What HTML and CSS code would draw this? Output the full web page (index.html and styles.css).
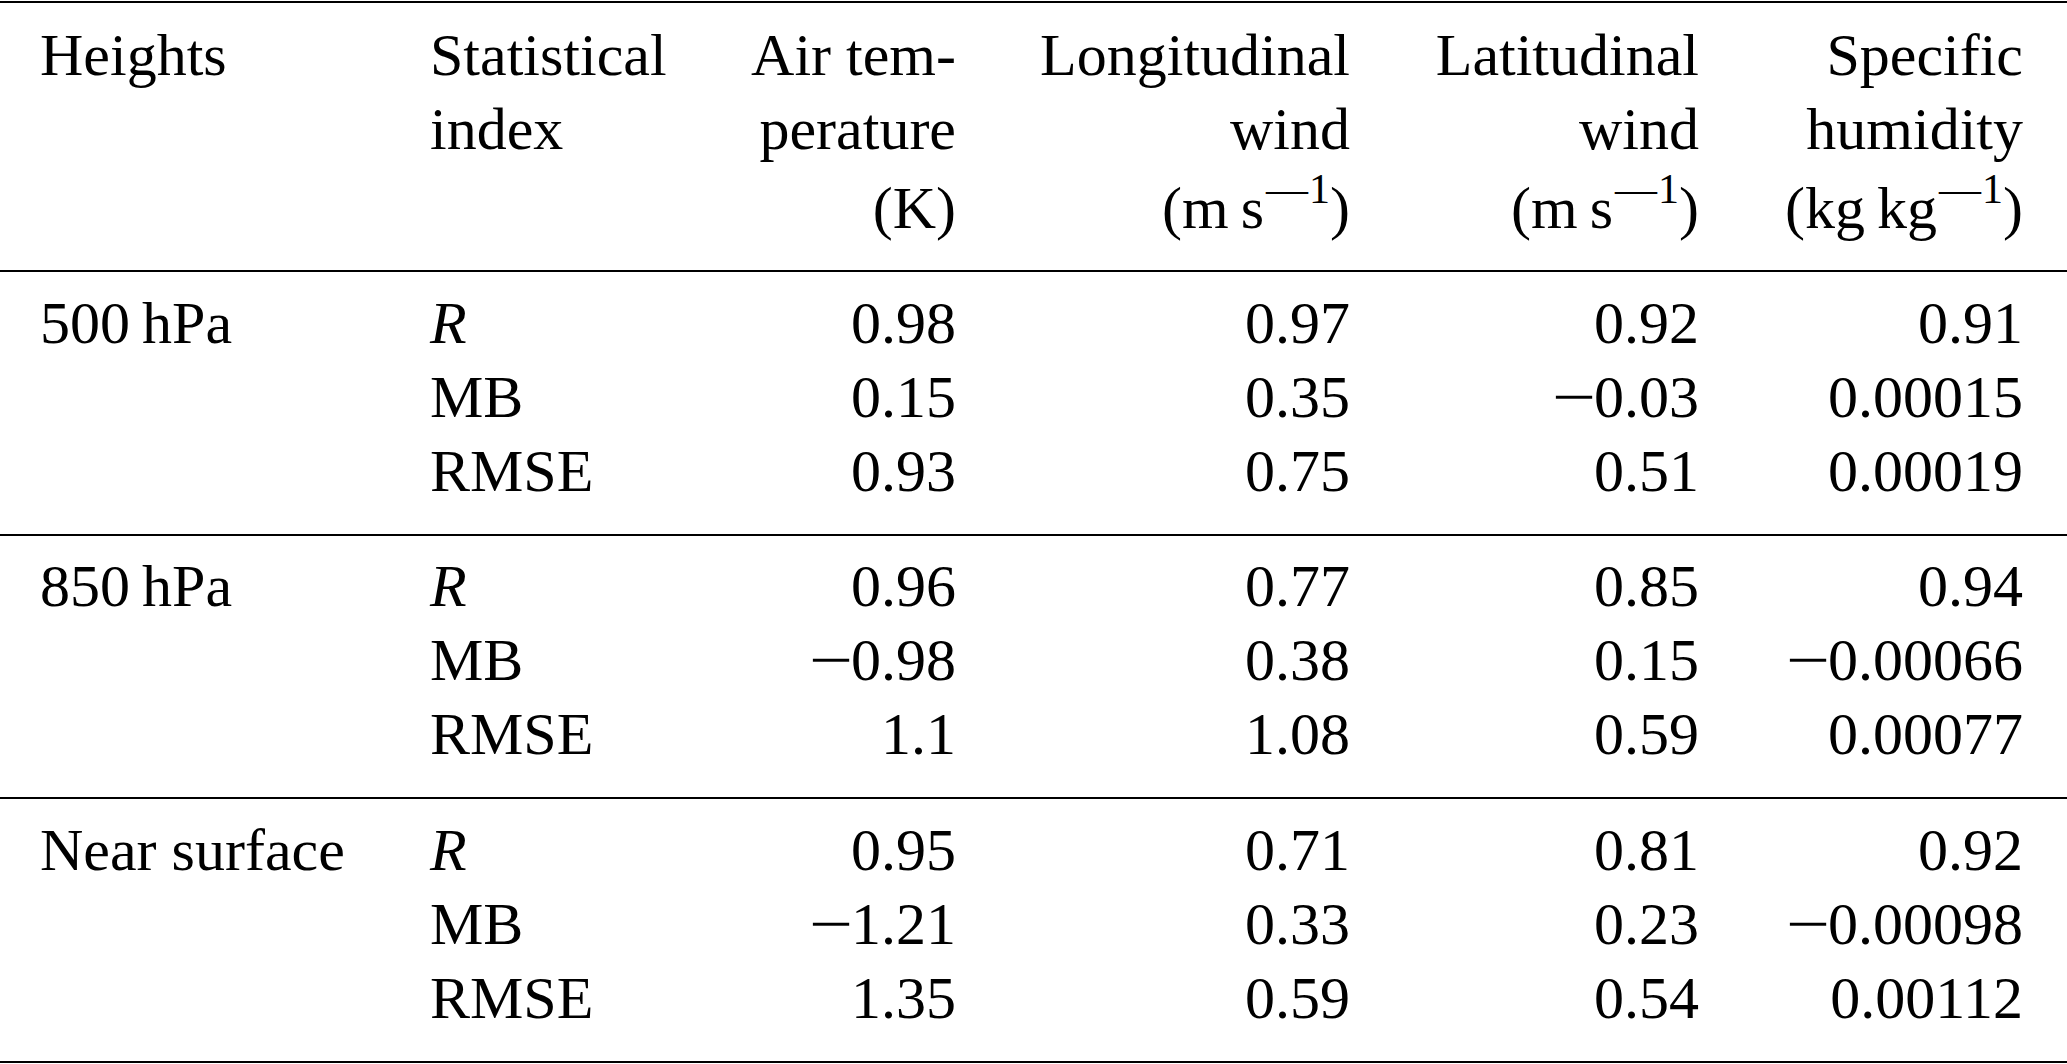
FILE: index.html
```html
<!DOCTYPE html>
<html lang="en">
<head>
<meta charset="utf-8">
<title>Statistical indices</title>
<link rel="stylesheet" href="styles.css">
</head>
<body>
<div class="table">
  <div class="head">
    <div class="c1"><span class="ln">Heights</span></div>
    <div class="c2"><span class="ln">Statistical</span><span class="ln">index</span></div>
    <div class="c3"><span class="ln">Air tem-</span><span class="ln">perature</span><span class="ln unit">(K)</span></div>
    <div class="c4"><span class="ln">Longitudinal</span><span class="ln">wind</span><span class="ln unit">(m&#8201;s<sup><span class="sminus">—</span>1</sup>)</span></div>
    <div class="c5"><span class="ln">Latitudinal</span><span class="ln">wind</span><span class="ln unit">(m&#8201;s<sup><span class="sminus">—</span>1</sup>)</span></div>
    <div class="c6"><span class="ln">Specific</span><span class="ln">humidity</span><span class="ln unit">(kg&#8201;kg<sup><span class="sminus">—</span>1</sup>)</span></div>
  </div>

  <div class="group">
    <div class="c1">500&#8201;hPa</div><div class="c2"><i>R</i></div><div class="c3">0.98</div><div class="c4">0.97</div><div class="c5">0.92</div><div class="c6">0.91</div>
    <div class="c1"></div><div class="c2">MB</div><div class="c3">0.15</div><div class="c4">0.35</div><div class="c5"><span class="neg">−</span>0.03</div><div class="c6">0.00015</div>
    <div class="c1"></div><div class="c2">RMSE</div><div class="c3">0.93</div><div class="c4">0.75</div><div class="c5">0.51</div><div class="c6">0.00019</div>
  </div>

  <div class="group">
    <div class="c1">850&#8201;hPa</div><div class="c2"><i>R</i></div><div class="c3">0.96</div><div class="c4">0.77</div><div class="c5">0.85</div><div class="c6">0.94</div>
    <div class="c1"></div><div class="c2">MB</div><div class="c3"><span class="neg">−</span>0.98</div><div class="c4">0.38</div><div class="c5">0.15</div><div class="c6"><span class="neg">−</span>0.00066</div>
    <div class="c1"></div><div class="c2">RMSE</div><div class="c3">1.1</div><div class="c4">1.08</div><div class="c5">0.59</div><div class="c6">0.00077</div>
  </div>

  <div class="group last">
    <div class="c1">Near surface</div><div class="c2"><i>R</i></div><div class="c3">0.95</div><div class="c4">0.71</div><div class="c5">0.81</div><div class="c6">0.92</div>
    <div class="c1"></div><div class="c2">MB</div><div class="c3"><span class="neg">−</span>1.21</div><div class="c4">0.33</div><div class="c5">0.23</div><div class="c6"><span class="neg">−</span>0.00098</div>
    <div class="c1"></div><div class="c2">RMSE</div><div class="c3">1.35</div><div class="c4">0.59</div><div class="c5">0.54</div><div class="c6">0.00112</div>
  </div>
</div>
</body>
</html>
```

FILE: styles.css
```css
html, body {
  margin: 0;
  padding: 0;
  background: #ffffff;
}

body {
  font-family: "Liberation Serif", "Times New Roman", serif;
  font-size: 60px;
  color: #000000;
  width: 2067px;
  height: 1064px;
  overflow: hidden;
}

.table {
  margin-top: 1px;
  width: 2067px;
  border-top: 2px solid #000;
}

.head,
.group {
  display: grid;
  grid-template-columns: 408px 292px 278px 394px 349px 346px;
  line-height: 74px;
}

.head {
  padding: 14.75px 0 25.25px;
}

.group {
  border-top: 2px solid #000;
  padding: 13.75px 0 25.75px;
}

.group.last {
  border-bottom: 2px solid #000;
}

.ln {
  display: block;
  white-space: nowrap;
}

.ln.unit {
  margin-top: 5px;
}

.c1 {
  padding-left: 40px;
  text-align: left;
  white-space: nowrap;
}

.c2 {
  padding-left: 22px;
  text-align: left;
  white-space: nowrap;
}

.c3,
.c4,
.c5 {
  padding-right: 22px;
  text-align: right;
  white-space: nowrap;
}

.c6 {
  padding-right: 44px;
  text-align: right;
  white-space: nowrap;
}

i {
  font-style: italic;
}

sup {
  font-size: 0.7em;
  line-height: 0;
  vertical-align: 25px;
  margin-left: 2px;
}

.sminus {
  margin-right: 1px;
}

.neg {
  display: inline-block;
  transform: scaleX(1.3);
  margin: 0 3px 0 3px;
}
```
